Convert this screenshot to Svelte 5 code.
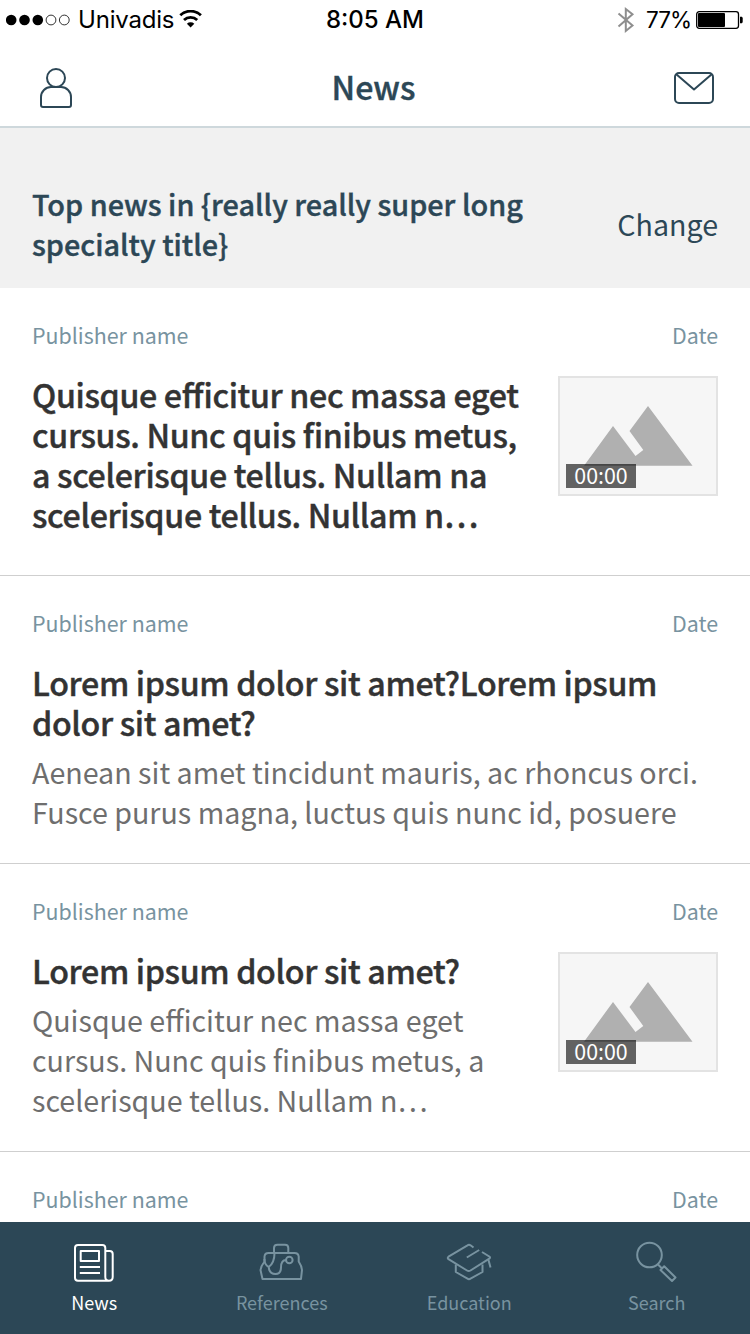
<script>
    let activeTab = $state('news');

    const tabs = [
        { id: 'news', label: 'News' },
        { id: 'references', label: 'References' },
        { id: 'education', label: 'Education' },
        { id: 'search', label: 'Search' }
    ];

    const articles = [
        {
            title: 'Quisque efficitur nec massa eget\ncursus. Nunc quis finibus metus,\na scelerisque tellus. Nullam na\nscelerisque tellus. Nullam n…',
            video: '00:00'
        },
        {
            title: 'Lorem ipsum dolor sit amet?Lorem ipsum\ndolor sit amet?',
            summary: 'Aenean sit amet tincidunt mauris, ac rhoncus orci.\nFusce purus magna, luctus quis nunc id, posuere'
        },
        {
            title: 'Lorem ipsum dolor sit amet?',
            summary: 'Quisque efficitur nec massa eget\ncursus. Nunc quis finibus metus, a\nscelerisque tellus. Nullam n…',
            video: '00:00'
        },
        { title: '' }
    ];
</script>

<div class="screen">
    <div class="status">
        <div class="status-left">
            <svg class="signal" width="65" height="12" viewBox="0 0 65 12">
                <circle cx="5.2" cy="6" r="5.3" />
                <circle cx="18.5" cy="6" r="5.3" />
                <circle cx="31.8" cy="6" r="5.3" />
                <circle class="off" cx="45" cy="6" r="4.9" />
                <circle class="off" cx="58.3" cy="6" r="4.9" />
            </svg>
            <span class="carrier">Univadis</span>
            <svg class="wifi" width="24" height="18" viewBox="0 0 24 18">
                <path d="M1.3 5.3a14.8 14.8 0 0 1 20.6 0" />
                <path d="M5 10a9.6 9.6 0 0 1 13.2 0" />
                <path class="dot" d="M7.9 13.7a5.5 5.5 0 0 1 7.4 0L11.6 17.5z" />
            </svg>
        </div>
        <div class="clock">8:05 AM</div>
        <div class="status-right">
            <svg class="bluetooth" width="18" height="28" viewBox="0 0 18 28">
                <path d="M1.5 7.5L15.5 19.5L8.8 25V3L15.5 8.3L1.5 20.5" />
            </svg>
            <span class="percent">77%</span>
            <svg class="battery" width="48" height="18" viewBox="0 0 48 18">
                <rect class="shell" x="0.7" y="0.7" width="41.8" height="16.6" rx="2.5" />
                <rect x="2" y="2" width="27" height="14" rx="1" />
                <path d="M44 5.7h1.2c1 0 1.5.6 1.5 1.5v3.6c0 .9-.5 1.5-1.5 1.5H44z" />
            </svg>
        </div>
    </div>

    <header class="navbar">
        <button class="icon-button" aria-label="Profile">
            <svg width="34" height="42" viewBox="0 0 34 42">
                <circle cx="17" cy="11" r="9" />
                <path d="M12 20h10a10 10 0 0 1 10 10v8q0 2-2 2H4q-2 0-2-2v-8a10 10 0 0 1 10-10z" />
            </svg>
        </button>
        <h1>News</h1>
        <button class="icon-button" aria-label="Messages">
            <svg width="42" height="34" viewBox="0 0 42 34">
                <rect x="2" y="2" width="38" height="30" rx="4" />
                <path d="M3 3l18 15.5L39 3" />
            </svg>
        </button>
    </header>

    <section class="specialty">
        <h2>{'Top news in {really really super long\nspecialty title}'}</h2>
        <button class="change">Change</button>
    </section>

    <main class="feed">
        {#each articles as article}
            <article class="card">
                <div class="meta">
                    <span>Publisher name</span>
                    <span>Date</span>
                </div>
                <div class="content">
                    <div class="copy">
                        <h3>{article.title}</h3>
                        {#if article.summary}
                            <p>{article.summary}</p>
                        {/if}
                    </div>
                    {#if article.video}
                        <div class="thumb">
                            <svg width="156" height="116" viewBox="0 0 156 116">
                                <path d="M24 87.7L53 48L75.5 78L83.3 72L69.5 53L88 28L132.5 87.7z" />
                            </svg>
                            <span class="duration">{article.video}</span>
                        </div>
                    {/if}
                </div>
            </article>
        {/each}
    </main>

    <nav class="tabbar">
        {#each tabs as tab}
            <button class="tab" class:active={activeTab === tab.id} onclick={() => (activeTab = tab.id)}>
                <svg width="48" height="48" viewBox="0 0 48 48">
                    {#if tab.id === 'news'}
                        <path d="M39 41.7H8q-3 0-3-3V9q0-3 3-3h24.300q3 0 3 3v29q0 3.700 3.700 3.700t3.700-3.700V15q0-3-3-3H35.500" />
                        <path d="M10.700 12H29v10H10.700zM9.800 28h20.200M9.800 34h20.200" />
                    {:else if tab.id === 'references'}
                        <path d="M16 14V9Q16 5.700 19.500 5.700h7.500Q30.300 5.700 30.300 9v5" />
                        <path d="M10.500 14h26q3.800 0 4.200 3.500v5Q43.700 27 44 31L43 40H4.500L2.500 31q.5-4 4-8.500v-5q.3-3.500 4-3.500z" />
                        <path d="M6.500 20q-.500 5 4.200 8q5.800-4 5.800-14M10.700 28q.5 7 6.800 7q5.500 0 5.500-6.500q0-7.500 5-7.500" />
                        <circle cx="31.300" cy="21" r="3.300" />
                    {:else if tab.id === 'education'}
                        <path d="M28.500 8.500L25.500 6.300q-1.500-1-3 0L3.500 17.700q-1.500 1.200 0 2.500l18.500 11.300q1.700 1 3.500 0L44.300 19.700q1.500-1.200 0-2.200L37 13" />
                        <path d="M21.800 18.500l12.400-7.500M43.500 21l2 7.500M10.800 25.500v7.500L22.500 39.700q1.500 1 3 0L37.500 33V25.500" />
                    {:else}
                        <circle cx="16.500" cy="16" r="12.300" />
                        <path d="M25 25.500l3.500 3.500M27.500 31l3.700-3.700L42.500 38.500L39 42z" />
                    {/if}
                </svg>
                <span>{tab.label}</span>
            </button>
        {/each}
    </nav>
</div>

<style>
    :global(body) {
        margin: 0;
        background: #fff;
    }

    .screen {
        width: 750px;
        height: 1334px;
        display: flex;
        flex-direction: column;
        overflow: hidden;
        font-family: 'Noto Sans CJK SC', 'Open Sans', sans-serif;
        color: #2c4756;
    }

    h1,
    h2,
    h3,
    p {
        margin: 0;
        white-space: pre;
    }

    /* the medium weight is a little light for headings */
    h1,
    h2,
    h3 {
        font-weight: 500;
        -webkit-text-stroke: 0.4px currentColor;
    }

    button {
        padding: 0;
        border: 0;
        background: none;
        font: inherit;
        color: inherit;
    }

    svg {
        display: block;
        flex-shrink: 0;
    }

    .status {
        height: 40px;
        flex-shrink: 0;
        display: grid;
        grid-template-columns: 1fr auto 1fr;
        align-items: center;
        font-family: Inter, sans-serif;
        font-size: 24px;
        line-height: 40px;
        color: #000;
    }

    .status-left,
    .status-right {
        display: flex;
        align-items: center;
    }

    .status-left {
        padding-left: 6px;
    }

    .status-right {
        justify-content: flex-end;
        padding-right: 6px;
    }

    .signal {
        margin-top: -1px;
    }

    .signal .off {
        fill: none;
        stroke: #000;
        stroke-width: 0.8;
    }

    .carrier {
        width: 96px;
        margin-left: 7px;
        letter-spacing: -0.2px;
    }

    .wifi {
        margin: 0 0 3px 5px;
    }

    .wifi path {
        fill: none;
        stroke: #000;
        stroke-width: 2.8;
    }

    .wifi .dot {
        fill: #000;
        stroke: none;
    }

    .clock {
        font-weight: 500;
    }

    .bluetooth {
        margin-top: -1px;
    }

    .bluetooth path {
        fill: none;
        stroke: #8e8e8e;
        stroke-width: 2;
    }

    .percent {
        width: 45px;
        margin: 0 5px 0 11px;
        font-size: 22.5px;
        letter-spacing: -1px;
    }

    .battery {
        margin-top: -1px;
    }

    .battery .shell {
        fill: none;
        stroke: #000;
        stroke-width: 1.3;
    }

    .navbar {
        height: 86px;
        flex-shrink: 0;
        display: grid;
        grid-template-columns: 1fr auto 1fr;
        align-items: center;
        padding: 0 35px 0 39px;
        border-bottom: 2px solid #ced8dc;
    }

    .navbar h1 {
        font-size: 32.2px;
        line-height: 40px;
        margin: 6px 7px 0 0;
    }

    .icon-button {
        justify-self: start;
        margin-top: 10px;
    }

    .icon-button:last-child {
        justify-self: end;
    }

    .icon-button svg {
        fill: none;
        stroke: #2c4756;
        stroke-width: 2;
        stroke-linejoin: round;
    }

    .specialty {
        height: 160px;
        flex-shrink: 0;
        box-sizing: border-box;
        display: flex;
        justify-content: space-between;
        align-items: center;
        padding: 32px 32px 0;
        background: #f1f1f1;
        line-height: 40px;
    }

    .specialty h2 {
        font-size: 28.8px;
    }

    .change {
        font-size: 28.6px;
    }

    .feed {
        flex: 1;
        min-height: 0;
        overflow: hidden;
    }

    .card {
        height: 288px;
        box-sizing: border-box;
        padding: 33px 32px 0;
        border-bottom: 1px solid #cfcfcf;
    }

    .meta {
        display: flex;
        justify-content: space-between;
        font-size: 21.4px;
        line-height: 28px;
        color: #7893a0;
    }

    .content {
        display: flex;
        justify-content: space-between;
        margin-top: 25px;
        line-height: 40px;
    }

    .copy h3 {
        font-size: 32.2px;
        letter-spacing: -0.35px;
        font-feature-settings: 'liga' 1;
        color: #333;
    }

    .copy p {
        margin-top: 10px;
        font-size: 28.63px;
        color: #6e6e6e;
    }

    .thumb {
        position: relative;
        width: 156px;
        height: 116px;
        margin-top: 2px;
        border: 2px solid #e3e3e3;
        background: #f6f6f6;
    }

    .thumb path {
        fill: #b0b0b0;
    }

    .duration {
        position: absolute;
        left: 6px;
        bottom: 6px;
        width: 70px;
        height: 24px;
        background: rgba(0, 0, 0, 0.6);
        font-size: 21.4px;
        line-height: 22px;
        text-align: center;
        color: #fff;
    }

    .tabbar {
        height: 112px;
        flex-shrink: 0;
        display: grid;
        grid-template-columns: repeat(4, 1fr);
        background: #2c4756;
    }

    .tab {
        display: flex;
        flex-direction: column;
        align-items: center;
        padding: 17px 0 0 1px;
        font-size: 18px;
        line-height: 26px;
        color: #7893a0;
    }

    .tab svg {
        fill: none;
        stroke: currentColor;
        stroke-width: 2;
        stroke-linejoin: round;
    }

    .tab span {
        margin-top: 2px;
    }

    .tab.active {
        color: #fff;
    }
</style>
